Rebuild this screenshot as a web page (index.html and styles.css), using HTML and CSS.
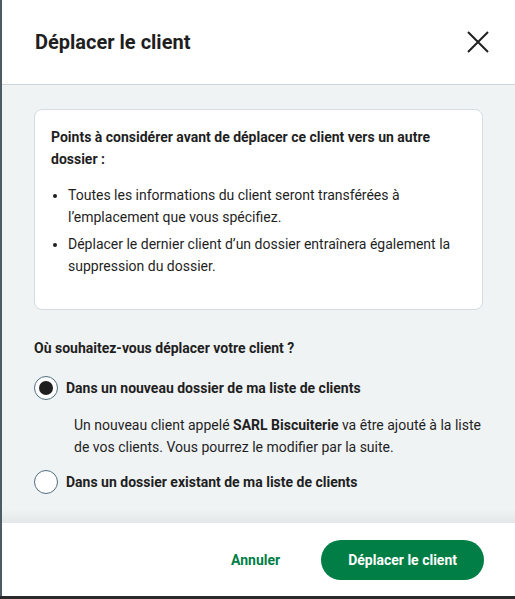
FILE: index.html
```
<!DOCTYPE html>
<html lang="fr">
<head>
    <meta charset="UTF-8">
    <title>Déplacer le client</title>
    <link rel="stylesheet" href="styles.css">
</head>
<body>
    <div class="modal">
        <header class="modal-head">
            <h1>Déplacer le client</h1>
            <button class="close" aria-label="Fermer">
                <svg width="22" height="22" viewBox="0 0 22 22"><path d="M1 1 L21 21 M21 1 L1 21" stroke="#1f1f1f" stroke-width="2" fill="none"/></svg>
            </button>
        </header>
        <div class="modal-body">
            <div class="info">
                <p class="info-title">Points à considérer avant de déplacer ce client vers un autre dossier :</p>
                <ul>
                    <li>Toutes les informations du client seront transférées à l’emplacement que vous spécifiez.</li>
                    <li>Déplacer le dernier client d’un dossier entraînera également la suppression du dossier.</li>
                </ul>
            </div>
            <p class="question">Où souhaitez-vous déplacer votre client ?</p>
            <div class="option">
                <span class="radio checked"></span>
                <span class="label">Dans un nouveau dossier de ma liste de clients</span>
            </div>
            <p class="hint">Un nouveau client appelé <b>SARL Biscuiterie</b> va être ajouté à la liste de vos clients. Vous pourrez le modifier par la suite.</p>
            <div class="option">
                <span class="radio"></span>
                <span class="label">Dans un dossier existant de ma liste de clients</span>
            </div>
        </div>
        <footer class="modal-foot">
            <button class="btn-link">Annuler</button>
            <button class="btn-primary">Déplacer le client</button>
        </footer>
    </div>
</body>
</html>
```
FILE: styles.css
```
* { box-sizing: border-box; }
html, body { margin: 0; height: 100%; }
body { background: #2a2a2a; font-family: Roboto, "Liberation Sans", sans-serif; color: #1f1f1f; font-size: 14px; line-height: 22px; }
body::before { content: ""; position: fixed; left: 0; top: 0; width: 2px; height: 596px; background: #4d5b64; }

.modal { margin-left: 2px; height: 596px; background: #fff; display: flex; flex-direction: column; }

.modal-head { height: 85px; display: flex; align-items: center; justify-content: space-between; padding: 0 26px 0 33px; border-bottom: 1px solid #ccd6dd; }
.modal-head h1 { margin: 0; font-size: 20px; font-weight: 700; line-height: 28px; }
.close { background: none; border: 0; padding: 0; width: 22px; height: 22px; cursor: pointer; }

.modal-body { flex: 1; background: #f0f3f4; padding: 24px 32px 0; background-image: linear-gradient(to bottom, rgba(0,0,0,0) 0, rgba(0,0,0,0) 424px, rgba(0,0,0,0.05) 438px); }

.info { background: #fff; border: 1px solid #d4dce1; border-radius: 8px; padding: 16px 16px 27px; }
.info-title { margin: 0; font-weight: 700; }
.info ul { margin: 14px 0 0; padding-left: 17px; }
.info li { margin-bottom: 5px; }

.question { margin: 27px 0 0; font-weight: 700; }

.option { display: flex; align-items: center; gap: 8px; margin-top: 17px; height: 24px; }
.radio { width: 24px; height: 24px; border-radius: 50%; border: 1px solid #4f6d7e; background: #fff; display: flex; align-items: center; justify-content: center; }
.radio.checked::after { content: ""; width: 14px; height: 14px; border-radius: 50%; background: #1f1f1f; }
.label { font-weight: 700; }

.hint { margin: 14px 0 0 40px; }
.hint b { font-weight: 700; }
.hint + .option { margin-top: 12px; }

.modal-foot { height: 73px; display: flex; align-items: center; justify-content: flex-end; gap: 41px; padding: 0 31px 0 0; }
.btn-link { background: none; border: 0; color: #007e45; font: 700 14px Roboto, "Liberation Sans", sans-serif; cursor: pointer; padding: 0; }
.btn-primary { background: #007e45; color: #fff; border: 0; border-radius: 20px; height: 40px; padding: 0 27px; font: 700 14px Roboto, "Liberation Sans", sans-serif; cursor: pointer; }
```
